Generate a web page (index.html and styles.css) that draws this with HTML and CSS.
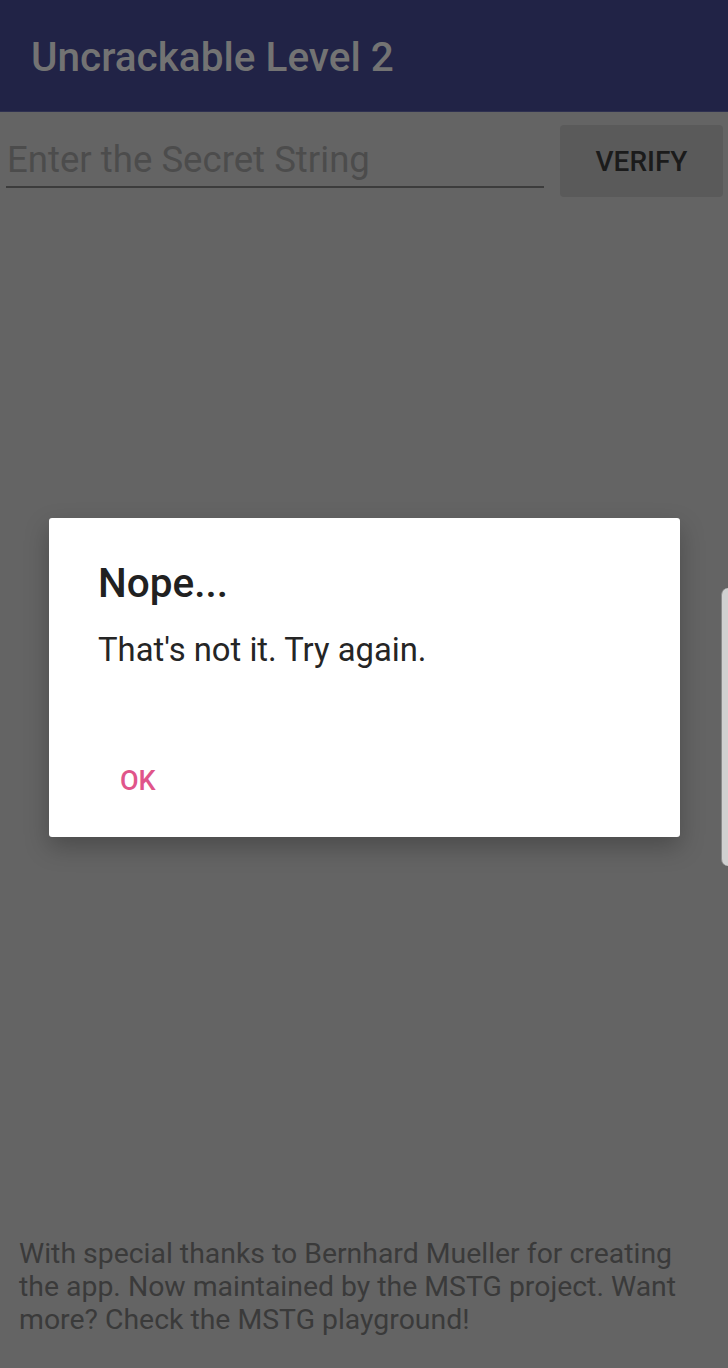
FILE: index.html
```html
<!DOCTYPE html>
<html lang="en">
<head>
  <meta charset="UTF-8">
  <meta name="viewport" content="width=device-width, initial-scale=1.0">
  <title>Uncrackable Level 2</title>
  <link rel="stylesheet" href="styles.css">
</head>
<body>
  <div id="app">
    <div class="toolbar">
      <span class="title">Uncrackable Level 2</span>
    </div>

    <div class="form">
      <div class="field">
        <span class="hint">Enter the Secret String</span>
      </div>
      <button class="verify">VERIFY</button>
    </div>

    <div class="spacer"></div>

    <p class="credits">With special thanks to Bernhard Mueller for creating the app. Now maintained by the MSTG project. Want more? Check the MSTG playground!</p>
  </div>

  <!-- alert dialog -->
  <div class="dialog">
    <div class="dialog-title">Nope...</div>
    <div class="dialog-msg">That's not it. Try again.</div>
    <div class="dialog-actions">
      <span class="dialog-ok">OK</span>
    </div>
  </div>

  <!-- edge panel handle -->
  <div class="edge"></div>
</body>
</html>
```

FILE: styles.css
```css
body,html{
  margin: 0;
  width: 100%;
  height: 100%;
}
body{
  background: #646464;
  font-family: Roboto, "Liberation Sans", sans-serif;
  position: relative;
  overflow: hidden;
}
#app{
  height: 1368px;
  display: flex;
  flex-direction: column;
}
.toolbar{
  height: 111px;
  background: #212346;
  border-bottom: 1px solid #2e3050;
  display: flex;
  align-items: center;
  padding-left: 31px;
}
.title{
  color: #737373;
  font-size: 40.5px;
  font-weight: 500;
  padding-top: 3px;
}
.form{
  display: flex;
  align-items: flex-start;
  padding: 12px 5px 0 6px;
  gap: 16px;
}
.field{
  flex: 1;
  height: 62px;
  border-bottom: 2px solid #3c3c3c;
  display: flex;
  align-items: flex-end;
}
.hint{
  color: #4c4c4c;
  font-size: 36.6px;
  padding-left: 1px;
  padding-bottom: 5px;
}
.verify{
  width: 163px;
  height: 72px;
  margin-top: 1px;
  border: none;
  border-radius: 4px;
  background: #5a5a5a;
  color: #1b1b1b;
  font-family: Roboto, "Liberation Sans", sans-serif;
  font-size: 28px;
  font-weight: 500;
  padding: 0;
}
.spacer{
  flex: 1;
}
.credits{
  margin: 0 0 32px 0;
  padding: 0 40px 0 19px;
  color: #3a3a3a;
  font-size: 28.4px;
  line-height: 33px;
}

.dialog{
  position: absolute;
  left: 49px;
  top: 518px;
  width: 631px;
  height: 319px;
  box-sizing: border-box;
  background: #fff;
  border-radius: 3px;
  padding: 41px 49px 0 49px;
  box-shadow: 0 10px 24px rgba(0,0,0,0.25);
  display: flex;
  flex-direction: column;
}
.dialog-title{
  color: #212121;
  font-size: 40.5px;
  font-weight: 500;
  line-height: 48px;
}
.dialog-msg{
  margin-top: 23px;
  color: #252525;
  font-size: 32.8px;
  line-height: 40px;
}
.dialog-actions{
  margin-top: auto;
  height: 110px;
  display: flex;
  align-items: center;
  padding-bottom: 2px;
  box-sizing: border-box;
}
.dialog-ok{
  margin-left: 22px;
  color: #e0558a;
  font-size: 27px;
  font-weight: 500;
}
.edge{
  position: absolute;
  right: 0;
  top: 588px;
  width: 6px;
  height: 278px;
  background: #d0d0d0;
  border-radius: 8px 0 0 8px;
  border-left: 1px solid #8a8a8a;
}
```
